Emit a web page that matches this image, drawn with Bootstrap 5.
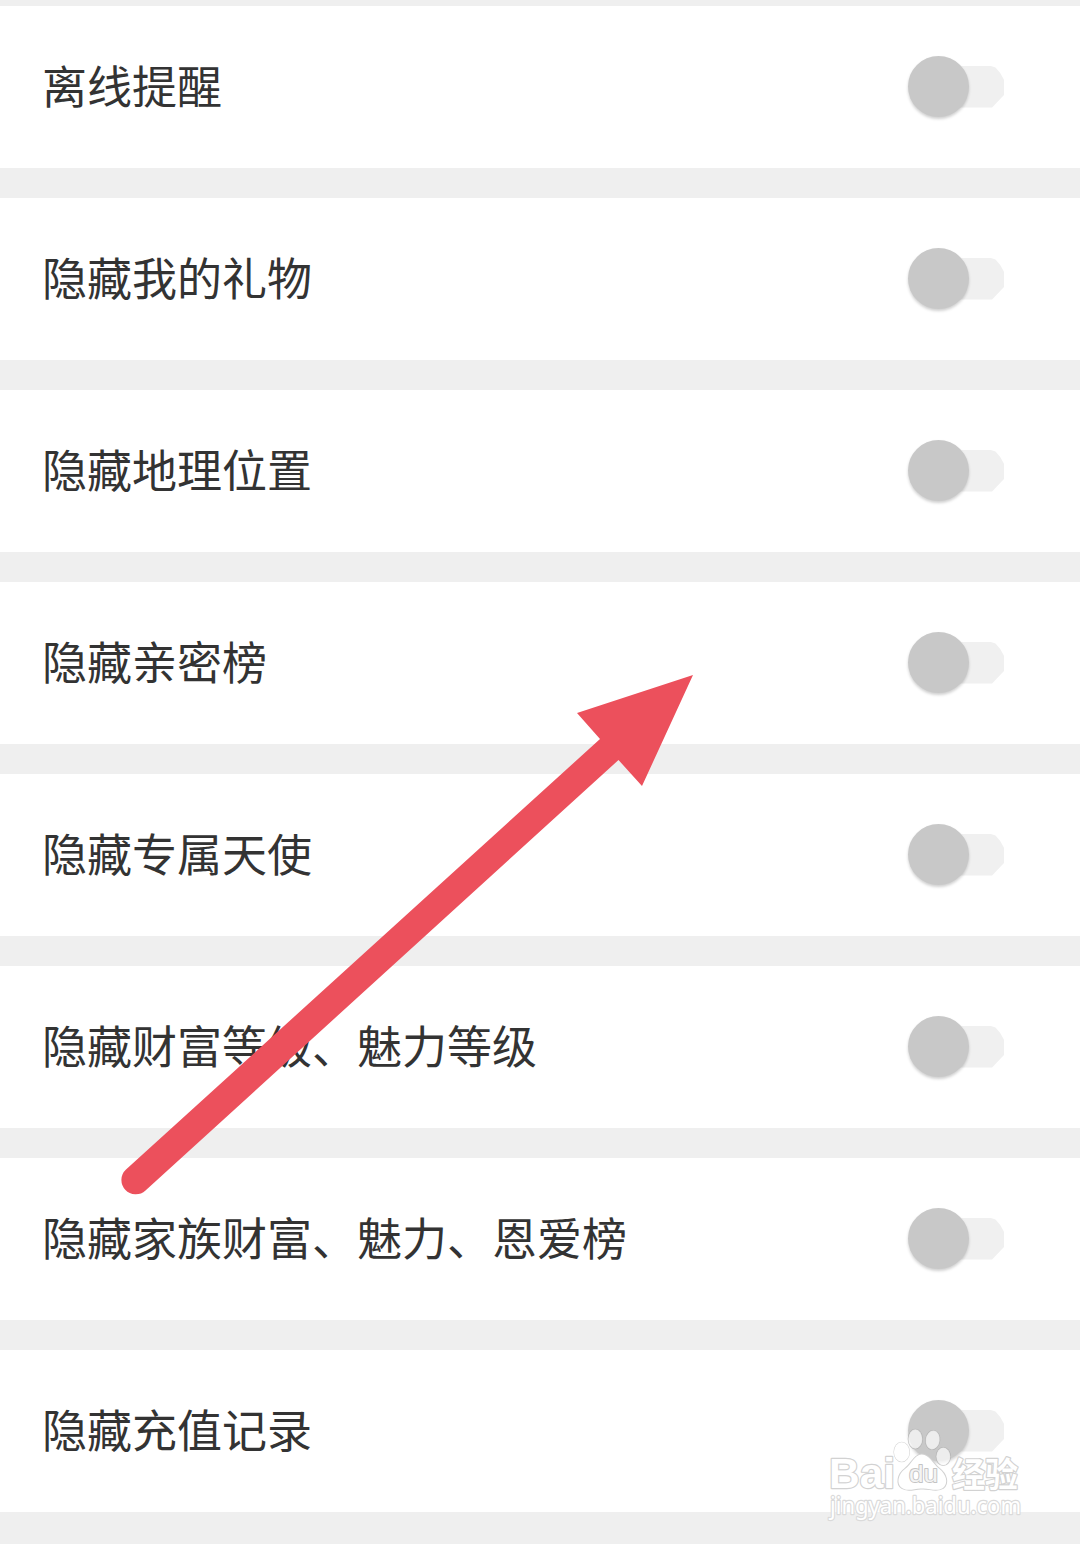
<!DOCTYPE html>
<html lang="zh-CN">
<head>
<meta charset="utf-8">
<meta name="viewport" content="width=device-width, initial-scale=1">
<title>隐私设置</title>
<link href="https://cdn.jsdelivr.net/npm/bootstrap@5.3.0/dist/css/bootstrap.min.css" rel="stylesheet">
<style>
body{background:#efefef;color:#333;font-family:"Noto Sans CJK SC",sans-serif;overflow:hidden}
.screen{width:1080px;height:1544px;padding-top:6px;gap:30px}
.setting{height:162px;flex:none;padding:0 76px 1px 42px;background:#fff}
.setting-name{font-size:45px;line-height:66px;margin-bottom:3px}
.toggle{width:96px;height:62px}
.toggle-track{width:66px;height:42px;margin-left:-31px;background:#f0f0f0;clip-path:polygon(0 0,78% 0,87% 5%,94% 17%,100% 34%,100% 70%,82% 100%,0 100%)}
.toggle-knob{width:61px;height:61px;background:#c8c8c8;box-shadow:0 2px 3px rgba(0,0,0,.19);z-index:1}
.overlay{left:0;top:0;pointer-events:none;z-index:2}
</style>
<script src="https://cdn.jsdelivr.net/npm/bootstrap@5.3.0/dist/js/bootstrap.bundle.min.js"></script>
</head>
<body>
<main class="screen position-relative d-flex flex-column">
<div class="setting d-flex align-items-center justify-content-between"><span class="setting-name">离线提醒</span><span class="toggle d-flex align-items-center"><span class="toggle-knob rounded-circle flex-shrink-0"></span><span class="toggle-track flex-shrink-0"></span></span></div>
<div class="setting d-flex align-items-center justify-content-between"><span class="setting-name">隐藏我的礼物</span><span class="toggle d-flex align-items-center"><span class="toggle-knob rounded-circle flex-shrink-0"></span><span class="toggle-track flex-shrink-0"></span></span></div>
<div class="setting d-flex align-items-center justify-content-between"><span class="setting-name">隐藏地理位置</span><span class="toggle d-flex align-items-center"><span class="toggle-knob rounded-circle flex-shrink-0"></span><span class="toggle-track flex-shrink-0"></span></span></div>
<div class="setting d-flex align-items-center justify-content-between"><span class="setting-name">隐藏亲密榜</span><span class="toggle d-flex align-items-center"><span class="toggle-knob rounded-circle flex-shrink-0"></span><span class="toggle-track flex-shrink-0"></span></span></div>
<div class="setting d-flex align-items-center justify-content-between"><span class="setting-name">隐藏专属天使</span><span class="toggle d-flex align-items-center"><span class="toggle-knob rounded-circle flex-shrink-0"></span><span class="toggle-track flex-shrink-0"></span></span></div>
<div class="setting d-flex align-items-center justify-content-between"><span class="setting-name">隐藏财富等级、魅力等级</span><span class="toggle d-flex align-items-center"><span class="toggle-knob rounded-circle flex-shrink-0"></span><span class="toggle-track flex-shrink-0"></span></span></div>
<div class="setting d-flex align-items-center justify-content-between"><span class="setting-name">隐藏家族财富、魅力、恩爱榜</span><span class="toggle d-flex align-items-center"><span class="toggle-knob rounded-circle flex-shrink-0"></span><span class="toggle-track flex-shrink-0"></span></span></div>
<div class="setting d-flex align-items-center justify-content-between"><span class="setting-name">隐藏充值记录</span><span class="toggle d-flex align-items-center"><span class="toggle-knob rounded-circle flex-shrink-0"></span><span class="toggle-track flex-shrink-0"></span></span></div>

<svg class="overlay position-absolute" width="1080" height="1544" viewBox="0 0 1080 1544" aria-hidden="true">
<!-- pointer arrow -->
<path d="M693 675 577 713 600 739 126 1169.500A14.300 14.300 0 1 0 145.500 1190.500L618.500 760 642 786Z" fill="#ec505c"/>
<!-- watermark -->
<g stroke="#d2d2d2" stroke-width="2.400" paint-order="stroke" stroke-linejoin="round" fill="#fff">
<g fill="#fff" fill-opacity=".68" stroke="#a8a8a8" stroke-opacity=".7" stroke-width="1.200">
<ellipse cx="901.700" cy="1452" rx="7.700" ry="9.700" fill-opacity="1" stroke="#c8c8c8"/>
<ellipse cx="915.300" cy="1439" rx="7" ry="9.700"/>
<ellipse cx="932.700" cy="1440" rx="7" ry="9.500" transform="rotate(8 932.700 1440)"/>
<ellipse cx="943.300" cy="1456.500" rx="7" ry="9"/>
</g>
<path d="M921.700 1454.500C914 1455 912 1464 905 1469C898 1474 896 1484 902 1488C908 1492 915 1488 922 1488.500C929 1488 937 1492 943 1488C949 1483 946 1474 939.500 1469C932 1463 930 1455 921.700 1454.500Z" stroke-width="2"/>
<text x="829" y="1488" textLength="66" lengthAdjust="spacingAndGlyphs" font-family="Liberation Sans,sans-serif" font-weight="700" font-size="43">Bai</text>
<text x="909" y="1482" textLength="29" lengthAdjust="spacingAndGlyphs" font-family="Liberation Sans,sans-serif" font-size="24" fill="#f4f4f4" stroke="#c4c4c4" stroke-width="1.800">du</text>
<text x="952" y="1487" textLength="66" lengthAdjust="spacingAndGlyphs" font-family="Noto Sans CJK SC,sans-serif" font-weight="700" font-size="34">经验</text>
<text x="830" y="1514" textLength="191" lengthAdjust="spacingAndGlyphs" font-family="Noto Sans,sans-serif" font-size="23" stroke="#dadada">jingyan.baidu.com</text>
</g>
</svg>
</main>
</body>
</html>
